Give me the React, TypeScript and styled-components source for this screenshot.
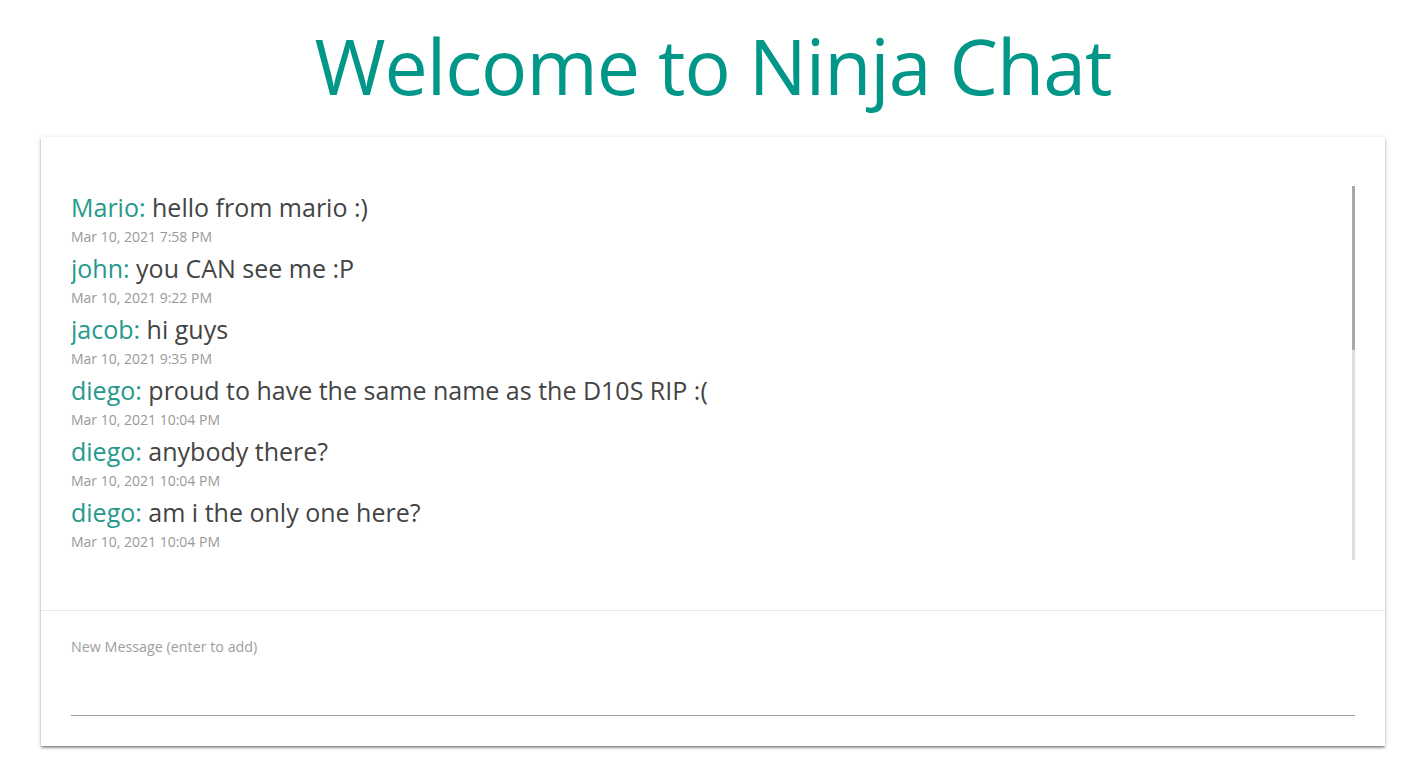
import React from "react";
import styled, { createGlobalStyle } from "styled-components";

const Global = createGlobalStyle`
  html, body { margin: 0; padding: 0; background: #fff; }
  body { font-family: "Open Sans", "Noto Sans", "Liberation Sans", sans-serif; color: #444; }
  * { box-sizing: border-box; }
`;

const Page = styled.div`
  display: flex;
  flex-direction: column;
  padding: 0 42px 20px 41px;
`;

const Title = styled.h1`
  margin: 0;
  height: 137px;
  padding-top: 20px;
  text-align: center;
  font-size: 77px;
  font-weight: 400;
  line-height: 1.2;
  color: #009688;
  letter-spacing: -1px;
`;

const Card = styled.section`
  background: #fff;
  box-shadow: 0 2px 2px 0 rgba(0,0,0,0.3), 0 3px 1px -2px rgba(0,0,0,0.12), 0 1px 5px 0 rgba(0,0,0,0.16);
  display: flex;
  flex-direction: column;
`;

const ChatBody = styled.div`
  padding: 49px 30px 50px;
  display: flex;
  height: 473px;
`;

const MessageList = styled.ul`
  flex: 1;
  list-style: none;
  margin: 0;
  padding: 0;
  overflow-y: auto;
  scrollbar-width: none;
  &::-webkit-scrollbar { display: none; }
`;

const ScrollTrack = styled.div`
  width: 3px;
  background: #dedede;
  display: flex;
  flex-direction: column;
`;

const ScrollThumb = styled.div`
  height: 164px;
  background: #a9a9a9;
`;

const Message = styled.li`
  display: flex;
  flex-direction: column;
  padding: 3px 0 0;
`;

const Line = styled.div`
  font-size: 25px;
  line-height: 37px;
  color: #444;
`;

const Name = styled.span`
  color: #26998c;
`;

const Time = styled.div`
  font-size: 14px;
  line-height: 21px;
  color: #999;
`;

const Composer = styled.form`
  border-top: 1px solid #e6e6e6;
  padding: 26px 30px 30px;
  display: flex;
  flex-direction: column;
`;

const Label = styled.label`
  font-size: 14.3px;
  line-height: 20px;
  color: #9e9e9e;
`;

const Input = styled.input`
  border: none;
  border-bottom: 1px solid #9e9e9e;
  outline: none;
  height: 59px;
  padding: 0;
  font: inherit;
  font-size: 16px;
  background: transparent;
`;

const messages = [
  { name: "Mario", content: "hello from mario :)", time: "Mar 10, 2021 7:58 PM" },
  { name: "john", content: "you CAN see me :P", time: "Mar 10, 2021 9:22 PM" },
  { name: "jacob", content: "hi guys", time: "Mar 10, 2021 9:35 PM" },
  { name: "diego", content: "proud to have the same name as the D10S RIP :(", time: "Mar 10, 2021 10:04 PM" },
  { name: "diego", content: "anybody there?", time: "Mar 10, 2021 10:04 PM" },
  { name: "diego", content: "am i the only one here?", time: "Mar 10, 2021 10:04 PM" },
];

export default function App() {
  return (
    <>
      <Global />
      <Page>
        <Title>Welcome to Ninja Chat</Title>
        <Card>
          <ChatBody>
            <MessageList>
              {messages.map((m, i) => (
                <Message key={i}>
                  <Line>
                    <Name>{m.name}:</Name> {m.content}
                  </Line>
                  <Time>{m.time}</Time>
                </Message>
              ))}
            </MessageList>
            <ScrollTrack aria-hidden="true">
              <ScrollThumb />
            </ScrollTrack>
          </ChatBody>
          <Composer onSubmit={(e) => e.preventDefault()}>
            <Label htmlFor="msg">New Message (enter to add)</Label>
            <Input id="msg" type="text" />
          </Composer>
        </Card>
      </Page>
    </>
  );
}
